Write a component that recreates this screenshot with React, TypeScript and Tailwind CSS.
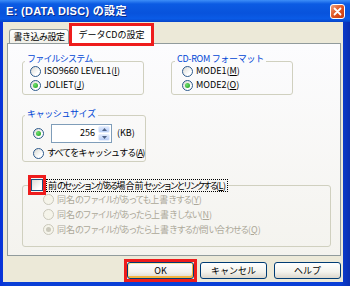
import type { ReactNode } from 'react';

function Radio({ checked = false, disabled = false }: { checked?: boolean; disabled?: boolean }) {
  return (
    <span
      className={
        disabled
          ? 'w-[11px] h-[11px] shrink-0 rounded-full border border-[#cac8bb] bg-[#f5f4ea] flex items-center justify-center'
          : 'w-[11px] h-[11px] shrink-0 rounded-full border border-[#2d5a8c] bg-[linear-gradient(135deg,#d8d8d2,#ffffff_70%)] flex items-center justify-center'
      }
    >
      {checked && (
        <span
          className={
            disabled
              ? 'w-[5px] h-[5px] rounded-full bg-[#cac8bb]'
              : 'w-[5px] h-[5px] rounded-full bg-[radial-gradient(circle_at_35%_35%,#6ee06e,#1c9a1c)]'
          }
        />
      )}
    </span>
  );
}

function RadioRow({
  checked,
  disabled,
  children,
}: {
  checked?: boolean;
  disabled?: boolean;
  children: ReactNode;
}) {
  return (
    <div className={disabled ? 'h-[15px] flex items-center gap-[3px] text-[#aca899]' : 'h-[14px] flex items-center gap-[3px]'}>
      <Radio checked={checked} disabled={disabled} />
      <span className="leading-[10px] whitespace-nowrap">{children}</span>
    </div>
  );
}

// kana runs are packed tighter than kanji, like the old proportional UI font
function K({ children }: { children: ReactNode }) {
  return <span className="tracking-[-1.4px]">{children}</span>;
}

function SpinBtn({ up }: { up?: boolean }) {
  return (
    <div className="flex-1 rounded-[2px] border border-[#e6eefc] bg-[linear-gradient(to_bottom,#dde8fd,#b7ccf6)] flex items-center justify-center">
      <svg width="5" height="3" viewBox="0 0 5 3">
        <path d={up ? 'M0 3L2.5 0L5 3Z' : 'M0 0L2.5 3L5 0Z'} fill="#4d6185" />
      </svg>
    </div>
  );
}

function Btn({ children, def }: { children: ReactNode; def?: boolean }) {
  return (
    <div
      className={
        def
          ? 'w-[67px] h-[17px] rounded-[3px] border border-[#003c74] bg-[linear-gradient(to_bottom,#ffffff,#f3f2ec_60%,#dcd7cc)] shadow-[inset_-1px_-2px_0_#f5b540,inset_1px_1px_0_#fde6a2] flex items-center justify-center'
          : 'w-[67px] h-[17px] rounded-[3px] border border-[#003c74] bg-[linear-gradient(to_bottom,#ffffff,#f3f2ec_60%,#dcd7cc)] flex items-center justify-center'
      }
    >
      <span className="leading-[10px]">{children}</span>
    </div>
  );
}

export default function App() {
  return (
    <div className="w-[350px] h-[286px] flex flex-col overflow-hidden bg-[linear-gradient(to_right,#0831d9,#0a3fd6_2%,#0a3fd6_97%,#0a2fb0)] [font-family:'Noto_Sans_CJK_JP',sans-serif] text-[9px] text-black">
      {/* title bar */}
      <div className="h-[22px] shrink-0 flex items-center justify-between pl-[6px] pr-[5px] bg-[linear-gradient(to_bottom,#3d8ef8_0%,#0b5be3_18%,#0853dc_60%,#0a5be6_85%,#0644c9_100%)]">
        <span className="[font-family:'Liberation_Sans','Noto_Sans_CJK_JP',sans-serif] font-bold text-[11px] tracking-[0.3px] leading-[14px] text-white [text-shadow:1px_1px_0_#0b2a8c]">
          E: (DATA DISC) の設定
        </span>
        <div className="w-[15px] h-[15px] rounded-[3px] border border-white bg-[linear-gradient(135deg,#f0a282,#e0541f_50%,#c53a12)] flex items-center justify-center">
          <svg width="9" height="9" viewBox="0 0 9 9">
            <path d="M1.5 1.5L7.5 7.5M7.5 1.5L1.5 7.5" stroke="white" strokeWidth="1.8" strokeLinecap="round" />
          </svg>
        </div>
      </div>

      {/* body */}
      <div className="flex-1 ml-[3px] mr-[7px] mb-[4px] bg-[#ece9d8] flex flex-col pl-[4px] pr-[2px]">
        {/* tabs */}
        <div className="mt-[1px] h-[20px] flex items-end pl-[2px]">
          <div className="w-[60px] h-[14px] border border-b-0 border-[#919b9c] rounded-t-[3px] bg-[linear-gradient(to_bottom,#ffffff,#f0efe8)] flex items-center justify-center">
            <span className="leading-[10px] tracking-[-0.5px]">書き込み設定</span>
          </div>
          <div className="relative z-10 -mb-[3px] w-[85px] h-[23px] border-[3px] border-[#ee1c1c] bg-white flex items-center justify-center">
            <span className="leading-[10px]">データCDの設定</span>
          </div>
        </div>

        {/* tab page */}
        <div className="w-[334px] h-[213px] border border-[#919b9c] bg-[linear-gradient(to_bottom,#fcfcfe,#f4f3ee)] flex flex-col">
          <div className="mt-[12px] h-[39px] pl-[14px] flex">
            <fieldset className="w-[122px] h-[39px] border border-[#d0d0bf] rounded-[3px]">
              <legend className="relative -top-[2px] ml-[2px] px-[2px] leading-[10px] tracking-[-0.8px] text-[#0046d5]">
                ファイルシステム
              </legend>
              <div className="-mt-[2px] pl-[7px] flex flex-col">
                <RadioRow>
                  ISO9660 LEVEL1(<u>I</u>)
                </RadioRow>
                <RadioRow checked>
                  JOLIET(<u>J</u>)
                </RadioRow>
              </div>
            </fieldset>
            <fieldset className="ml-[27px] w-[122px] h-[39px] border border-[#d0d0bf] rounded-[3px]">
              <legend className="relative -top-[2px] ml-[3px] px-[2px] leading-[10px] tracking-[-0.3px] text-[#0046d5]">
                CD-ROM フォーマット
              </legend>
              <div className="-mt-[2px] pl-[10px] flex flex-col">
                <RadioRow>
                  MODE1(<u>M</u>)
                </RadioRow>
                <RadioRow checked>
                  MODE2(<u>O</u>)
                </RadioRow>
              </div>
            </fieldset>
          </div>

          <fieldset className="mt-[15px] ml-[14px] w-[122px] h-[52px] border border-[#d0d0bf] rounded-[3px]">
            <legend className="relative -top-[1px] ml-[2px] px-[2px] leading-[10px] tracking-[-0.4px] text-[#0046d5]">
              キャッシュサイズ
            </legend>
            <div className="mt-[3px] pl-[10px] flex flex-col">
              <div className="h-[20px] flex items-center">
                <Radio checked />
                <div className="ml-[7px] w-[61px] h-[19px] border border-[#7f9db9] bg-white flex items-center">
                  <span className="flex-1 text-right pr-[2px] leading-[10px]">256</span>
                  <div className="w-[14px] h-full flex flex-col gap-[1px] p-[1px]">
                    <SpinBtn up />
                    <SpinBtn />
                  </div>
                </div>
                <span className="ml-[5px] leading-[10px]">(KB)</span>
              </div>
              <div className="mt-[3px] tracking-[-0.85px]">
                <RadioRow>
                  すべてをキャッシュする(<u>A</u>)
                </RadioRow>
              </div>
            </div>
          </fieldset>

          <fieldset className="mt-[13px] ml-[14px] w-[309px] h-[72px] border border-[#d0d0bf] rounded-[3px]">
            <legend className="ml-[5px] flex items-center">
              <span className="w-[18px] h-[20px] border-[3px] border-[#ee1c1c] flex items-center justify-center">
                <span className="w-[12px] h-[12px] border border-[#1c5180] bg-[linear-gradient(135deg,#dcdcd7,#ffffff_75%)]" />
              </span>
              <span className="border border-dotted border-black px-[1px] leading-[11px] whitespace-nowrap">
                前<span className="tracking-[-2.4px]">のセッションがある</span>場合前
                <span className="tracking-[-2.4px]">セッションとリンクする</span>
                <span className="tracking-[-0.5px]">
                  (<u>L</u>)
                </span>
              </span>
            </legend>
            <div className="-mt-[3px] pl-[20px] flex flex-col">
              <RadioRow disabled>
                同名<K>のファイルがあっても</K>上書<K>きする</K>(<u>Y</u>)
              </RadioRow>
              <RadioRow disabled>
                同名<K>のファイルがあったら</K>上書<K>きしない</K>(<u>N</u>)
              </RadioRow>
              <RadioRow disabled checked>
                同名<K>のファイルがあったら</K>上書<K>きするか</K>問<K>い</K>合<K>わせる</K>(<u>Q</u>)
              </RadioRow>
            </div>
          </fieldset>
        </div>

        {/* buttons */}
        <div className="mt-[3px] h-[23px] flex items-center justify-end">
          <div className="w-[73px] h-[23px] border-[3px] border-[#ee1c1c] flex items-center justify-center">
            <Btn def>OK</Btn>
          </div>
          <div className="ml-[3px]">
            <Btn>キャンセル</Btn>
          </div>
          <div className="ml-[7px]">
            <Btn>ヘルプ</Btn>
          </div>
        </div>
      </div>
    </div>
  );
}
